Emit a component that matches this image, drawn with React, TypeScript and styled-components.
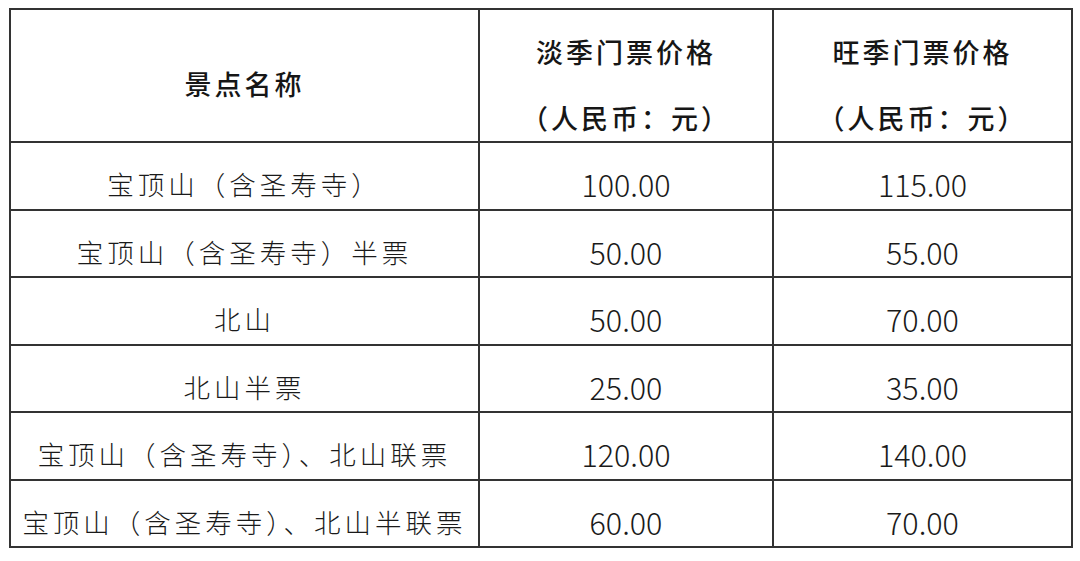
import React from 'react';
import styled, { createGlobalStyle } from 'styled-components';

const GlobalStyle = createGlobalStyle`
  html, body {
    margin: 0;
    padding: 0;
    background: #ffffff;
  }
  body {
    font-family: "Noto Sans CJK SC", "Noto Sans", sans-serif;
    color: #1a1a1a;
  }
`;

const Page = styled.div`
  width: 1080px;
  height: 561px;
  padding: 8px 0 0 9px;
  box-sizing: border-box;
  background: #fff;
`;

const Table = styled.table`
  border-collapse: collapse;
  width: 1064px;
  table-layout: fixed;
`;

const HeadCell = styled.th<{ $width?: number }>`
  ${({ $width }) => ($width ? `width: ${$width}px;` : '')}
  height: 131px;
  border: 2px solid #333;
  padding: 0;
  font-weight: 500;
  font-size: 27px;
  letter-spacing: 3px;
  text-align: center;
  vertical-align: middle;
  color: #161616;
`;

const HeadLines = styled.div<{ $offset?: number }>`
  display: flex;
  flex-direction: column;
  align-items: center;
  gap: 30px;
  line-height: 36px;
  padding-top: ${({ $offset }) => $offset ?? 0}px;
`;

const Row = styled.tr`
  height: 67.5px;
`;

const NameCell = styled.td`
  border: 2px solid #333;
  padding: 17px 0 0 0;
  text-align: center;
  vertical-align: middle;
  font-size: 26.5px;
  font-weight: 300;
  letter-spacing: 4px;
  line-height: 34px;
  white-space: nowrap;
`;

const PriceCell = styled.td`
  border: 2px solid #333;
  padding: 17px 0 0 0;
  text-align: center;
  vertical-align: middle;
  font-size: 30.5px;
  font-weight: 300;
  line-height: 34px;
`;

const rows = [
  { name: '宝顶山（含圣寿寺）', low: '100.00', high: '115.00' },
  { name: '宝顶山（含圣寿寺）半票', low: '50.00', high: '55.00' },
  { name: '北山', low: '50.00', high: '70.00' },
  { name: '北山半票', low: '25.00', high: '35.00' },
  { name: '宝顶山（含圣寿寺）、北山联票', low: '120.00', high: '140.00' },
  { name: '宝顶山（含圣寿寺）、北山半联票', low: '60.00', high: '70.00' },
];

const App: React.FC = () => {
  return (
    <>
      <GlobalStyle />
      <Page>
        <Table>
          <thead>
            <tr>
              <HeadCell $width={467}>
                <HeadLines $offset={16}>景点名称</HeadLines>
              </HeadCell>
              <HeadCell $width={292}>
                <HeadLines $offset={18}>
                  <span>淡季门票价格</span>
                  <span>（人民币：元）</span>
                </HeadLines>
              </HeadCell>
              <HeadCell>
                <HeadLines $offset={18}>
                  <span>旺季门票价格</span>
                  <span>（人民币：元）</span>
                </HeadLines>
              </HeadCell>
            </tr>
          </thead>
          <tbody>
            {rows.map((r) => (
              <Row key={r.name}>
                <NameCell>{r.name}</NameCell>
                <PriceCell>{r.low}</PriceCell>
                <PriceCell>{r.high}</PriceCell>
              </Row>
            ))}
          </tbody>
        </Table>
      </Page>
    </>
  );
};

export default App;
